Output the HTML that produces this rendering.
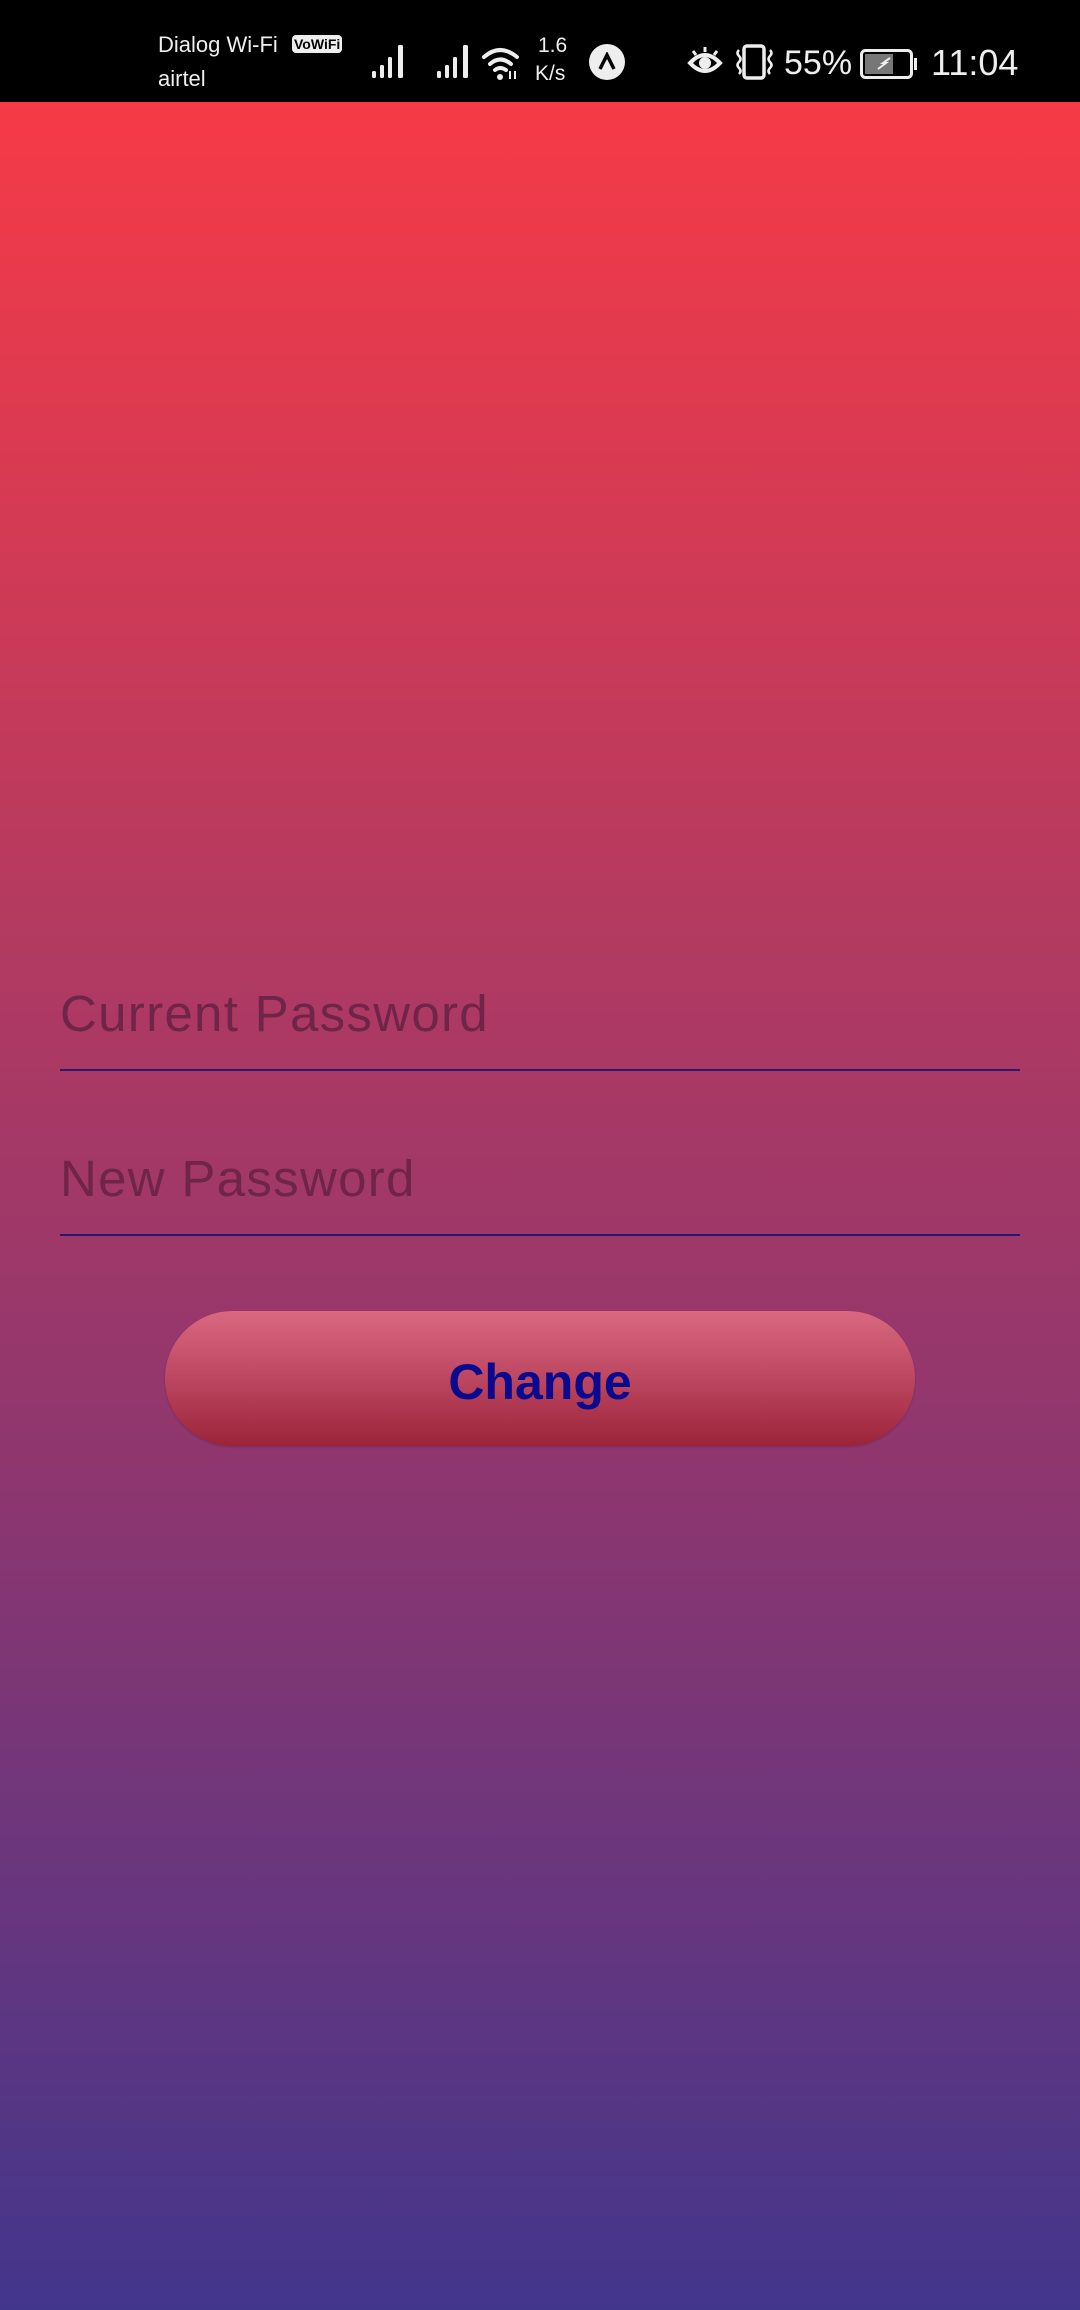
<!DOCTYPE html>
<html><head><meta charset="utf-8"><style>
*{margin:0;padding:0;box-sizing:border-box}
body{width:1080px;height:2310px;position:relative;overflow:hidden;font-family:"Liberation Sans",sans-serif;background:linear-gradient(to bottom,#f63a47 102px,#b53a60 900px,#8c3670 1500px,#42368c 2310px)}
.sb{position:absolute;left:0;top:0;width:1080px;height:102px;background:#000;color:#eee}
.t{position:absolute;white-space:nowrap}
.ph{position:absolute;left:60px;font-size:51px;color:#6e2547;letter-spacing:1.3px}
.ln{position:absolute;left:60px;width:960px;height:2px;background:#2a1870}
.btn{position:absolute;left:165px;top:1311px;width:750px;height:135px;border-radius:68px;background:linear-gradient(to bottom,#d96880,#c04a64 45%,#9b2439);box-shadow:0 1px 2px rgba(0,0,0,.2)}
.btn span{position:absolute;left:0;right:0;top:42px;text-align:center;font-weight:bold;font-size:50px;color:#0b0a8e}
</style></head><body>
<div class="sb">
<div class="t" style="left:158px;top:32px;font-size:22px">Dialog Wi-Fi</div>
<div class="t" style="left:292px;top:35px;font-size:14px;font-weight:bold;background:#eee;color:#000;border-radius:4px;padding:1px 2px">VoWiFi</div>
<div class="t" style="left:158px;top:66px;font-size:22px">airtel</div>
<svg class="t" style="left:372px;top:45px" width="36" height="34"><g fill="#eee"><rect x="0" y="26" width="4" height="7" rx="1.5"/><rect x="8" y="20" width="4" height="13" rx="1.5"/><rect x="16" y="12" width="4" height="21" rx="1.5"/><rect x="26" y="0" width="5" height="33" rx="1.5"/></g></svg>
<svg class="t" style="left:437px;top:45px" width="36" height="34"><g fill="#eee"><rect x="0" y="26" width="4" height="7" rx="1.5"/><rect x="8" y="20" width="4" height="13" rx="1.5"/><rect x="16" y="12" width="4" height="21" rx="1.5"/><rect x="26" y="0" width="5" height="33" rx="1.5"/></g></svg>
<svg class="t" style="left:481px;top:46px" width="42" height="34"><g fill="none" stroke="#eee" stroke-width="4" stroke-linecap="round"><path d="M3 11 Q19 -3 36 11"/><path d="M9 18 Q19 9 30 18"/><path d="M14 24 Q19 20 25 24"/></g><circle cx="19" cy="31" r="3" fill="#eee"/><path d="M29 25v8M34 25v8" stroke="#eee" stroke-width="2"/></svg>
<div class="t" style="left:538px;top:34px;font-size:21px">1.6</div>
<div class="t" style="left:535px;top:62px;font-size:21px">K/s</div>
<div class="t" style="left:589px;top:44px;width:36px;height:36px;border-radius:50%;background:#eee"></div>
<svg class="t" style="left:597px;top:52px" width="20" height="20"><path d="M3 17 L10 3 L17 17" fill="none" stroke="#000" stroke-width="3.5"/></svg>
<svg class="t" style="left:687px;top:45px" width="36" height="34"><path d="M3 18 Q18 2 33 18 Q18 34 3 18Z" fill="none" stroke="#eee" stroke-width="4"/><circle cx="18" cy="18" r="6" fill="#eee"/><path d="M6 6l3 4M18 2v5M30 6l-3 4" stroke="#eee" stroke-width="3"/></svg>
<svg class="t" style="left:734px;top:44px" width="42" height="36"><rect x="10" y="2" width="20" height="32" rx="3" fill="none" stroke="#eee" stroke-width="3.5"/><path d="M5 6q-3 3 0 6t0 6 0 6 0 6M36 6q3 3 0 6t0 6 0 6 0 6" fill="none" stroke="#eee" stroke-width="2.5"/></svg>
<div class="t" style="left:784px;top:44px;font-size:34px">55%</div>
<svg class="t" style="left:860px;top:49px" width="58" height="30"><rect x="1.5" y="1.5" width="50" height="27" rx="4" fill="none" stroke="#eee" stroke-width="3"/><rect x="5" y="5" width="28" height="20" fill="#777"/><rect x="54" y="9" width="3" height="12" fill="#eee"/><path d="M18 20l8-6-3 0 7-5" stroke="#eee" stroke-width="2" fill="none"/></svg>
<div class="t" style="left:931px;top:42px;font-size:36px">11:04</div>
</div>
<div class="ph" style="top:984px">Current Password</div>
<div class="ln" style="top:1069px"></div>
<div class="ph" style="top:1149px">New Password</div>
<div class="ln" style="top:1234px"></div>
<div class="btn"><span>Change</span></div>
</body></html>
